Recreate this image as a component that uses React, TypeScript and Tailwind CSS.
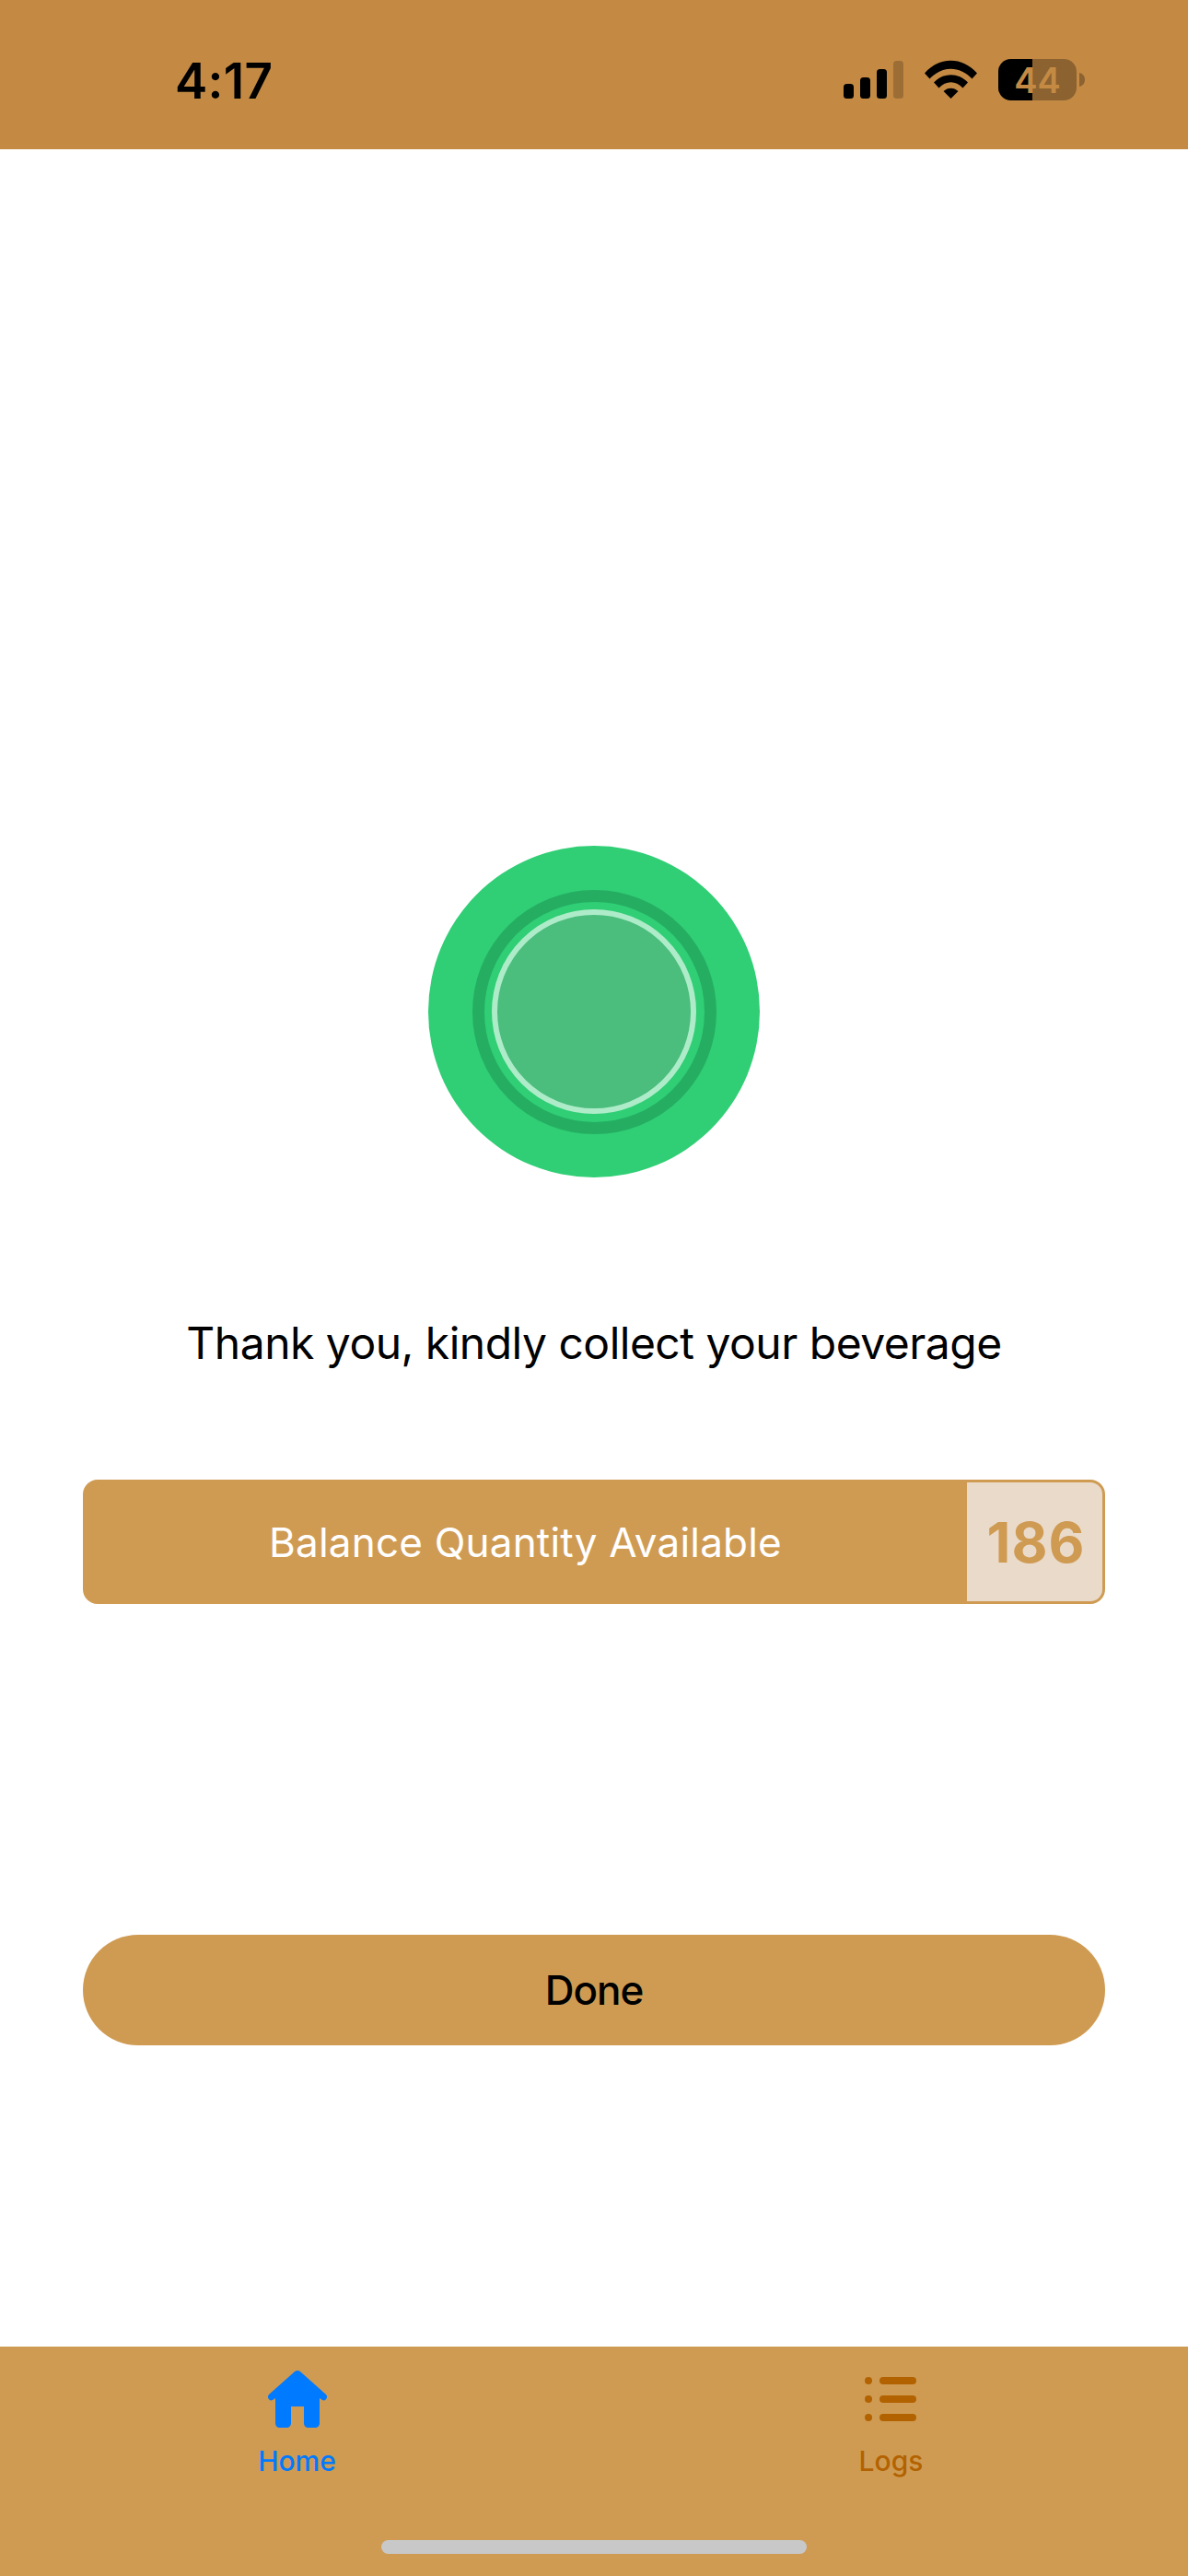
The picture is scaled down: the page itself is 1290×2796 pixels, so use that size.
export default function App() {
  return (
    <div className="flex h-[2796px] w-[1290px] flex-col bg-white font-['Inter','Liberation_Sans',sans-serif] text-black">
      <header className="relative flex h-[162px] shrink-0 items-start justify-between bg-[#c48a44] pl-[190px] pr-[112px]">
        <span className="mt-[55px] text-[53px] font-semibold leading-[66px] tracking-[0.3px]">4:17</span>
        <div className="mt-[64px] flex items-start">
          <svg width="66" height="42" viewBox="0 0 66 42" className="mt-[2px]">
            <rect x="0" y="25" width="11" height="16" rx="3.5" fill="#000" />
            <rect x="18" y="18" width="11" height="23" rx="3.5" fill="#000" />
            <rect x="36" y="9" width="11" height="32" rx="3.5" fill="#000" />
            <rect x="54" y="0" width="11" height="41" rx="3.5" fill="#000" opacity="0.2" />
          </svg>
          <svg width="57" height="42" viewBox="0 0 57 42" className="ml-[22px] mt-[1px]">
            <path d="M0 14.5 C16 -4 41 -4 57 14.5 L51.5 20.5 C38 6 19 6 5.5 20.5 Z" fill="#000" />
            <path d="M10 24.5 C20 13.5 37 13.5 47 24.5 L41.5 30.5 C33.5 22 23.5 22 15.5 30.5 Z" fill="#000" />
            <path d="M20.5 34 C25 29.5 32 29.5 36.5 34 L28.5 42 Z" fill="#000" />
          </svg>
          <div className="relative ml-[23px] flex h-[45px] w-[85px] overflow-hidden rounded-[14px] bg-[#8b6230]">
            <div className="h-full w-[37px] bg-black" />
            <span className="absolute inset-0 flex items-center justify-center text-[38px] font-semibold leading-none text-[#c48a44]">44</span>
          </div>
          <svg width="6" height="15" viewBox="0 0 6 15" className="ml-[3px] mt-[15px]">
            <path d="M0 0 C4 1 6 4 6 7.5 C6 11 4 14 0 15 Z" fill="#8b6230" />
          </svg>
        </div>
      </header>

      <main className="flex flex-1 flex-col items-center px-[90px] pt-[756px]">
        <div className="flex h-[360px] w-[360px] shrink-0 items-center justify-center rounded-full bg-[#30ce75]">
          <div className="flex h-[265px] w-[265px] items-center justify-center rounded-full border-[13px] border-[#25ae62]">
            <div className="h-[222px] w-[222px] rounded-full border-[6px] border-[#aeecc9] bg-[#4bbd7c]" />
          </div>
        </div>
        <p className="mt-[150px] text-[48px] leading-[60px] tracking-[-0.5px]">Thank you, kindly collect your beverage</p>
        <div className="mt-[118px] flex h-[135px] w-full overflow-hidden rounded-[16px] border-[3px] border-[#cf9b53] bg-[#cf9b53]">
          <div className="flex flex-1 items-center justify-center pr-[2px] text-[44px] tracking-[0.2px] text-white">Balance Quantity Available</div>
          <div className="flex w-[147px] items-center justify-center bg-[#eadaca] pl-[3px] text-[60px] font-bold tracking-[1px] text-[#cf9b53]">186</div>
        </div>
        <button className="mt-[359px] flex h-[120px] w-full items-center justify-center rounded-full bg-[#cf9b53] text-[44px] font-medium tracking-[-1px] text-black">Done</button>
      </main>

      <nav className="relative h-[249px] shrink-0 bg-[#cf9b53]">
        <div className="grid grid-cols-2">
          <div className="flex flex-col items-center pt-[26px] text-[#007aff]">
            <svg width="66" height="62" viewBox="0 0 66 62">
              <path d="M33 0 C35 0 36 1 37 2 L64 26 C67 29 63 34 60 32 L57 30 V57 C57 60 55 62 52 62 H45 C42 62 40 60 40 57 V39 H26 V57 C26 60 24 62 21 62 H14 C11 62 9 60 9 57 V30 L6 32 C3 34 -1 29 2 26 L29 2 C30 1 31 0 33 0 Z" fill="#007aff" />
            </svg>
            <span className="mt-[18px] text-[30px] font-medium leading-[36px]">Home</span>
          </div>
          <div className="flex flex-col items-center pt-[26px] text-[#b36200]">
            <svg width="62" height="62" viewBox="0 0 62 62">
              <circle cx="6" cy="11" r="4" fill="#b36200" />
              <circle cx="6" cy="31" r="4" fill="#b36200" />
              <circle cx="6" cy="51" r="4" fill="#b36200" />
              <rect x="18" y="7" width="40" height="8" rx="4" fill="#b36200" />
              <rect x="18" y="27" width="40" height="8" rx="4" fill="#b36200" />
              <rect x="18" y="47" width="40" height="8" rx="4" fill="#b36200" />
            </svg>
            <span className="mt-[18px] text-[30px] font-medium leading-[36px]">Logs</span>
          </div>
        </div>
        <div className="absolute bottom-[24px] left-[414px] h-[15px] w-[462px] rounded-full bg-[#c8c8c8]" />
      </nav>
    </div>
  );
}
